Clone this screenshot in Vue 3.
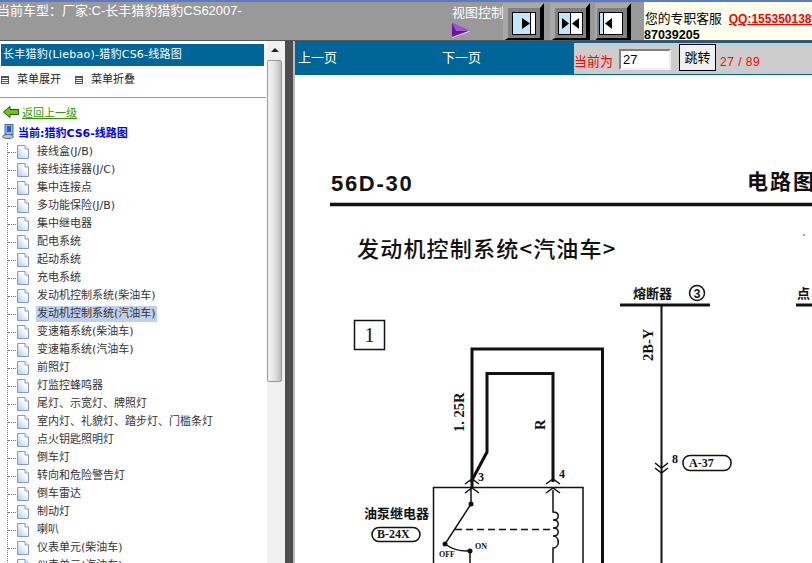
<template>
  <div class="page">
    <div class="top-bar">
      <div class="car-type">当前车型：厂家:C-长丰猎豹猎豹CS62007-</div>
      <div class="view-ctl">
        <span>视图控制</span>
        <svg class="view-arrow" width="19" height="15" viewBox="0 0 19 15">
          <polygon points="0,0 18,8 0,14.500" fill="#6a12a4" />
          <polygon points="0,0 18,8 4,8" fill="#a452d6" />
          <path d="M0 14.500L18 8" stroke="#e6d8ee" fill="none" />
        </svg>
      </div>
      <div class="view-btns">
        <div class="view-btn btn-a">
          <svg width="24" height="23" viewBox="0 0 24 23">
            <rect x="0.5" y="0.500" width="23" height="22" fill="#fff" stroke="#000" />
            <rect x="1" y="1" width="17" height="21" fill="#bfe8ff" />
            <line x1="18.500" y1="1" x2="18.500" y2="22" stroke="#000" />
            <polygon points="10,6 10,17 18,11.500" fill="#000" />
          </svg>
        </div>
        <div class="view-btn btn-b">
          <svg width="25" height="23" viewBox="0 0 25 23">
            <rect x="0.5" y="0.500" width="24" height="22" fill="#fff" stroke="#000" />
            <rect x="1" y="1" width="11" height="21" fill="#bfe8ff" />
            <line x1="12.500" y1="1" x2="12.500" y2="22" stroke="#000" />
            <polygon points="4,6 4,17 11,11.500" fill="#000" />
            <polygon points="21,6 21,17 14,11.500" fill="#000" />
          </svg>
        </div>
        <div class="view-btn btn-c">
          <svg width="24" height="23" viewBox="0 0 24 23">
            <rect x="0.5" y="0.500" width="23" height="22" fill="#fff" stroke="#000" />
            <rect x="1" y="1" width="3" height="21" fill="#bfe8ff" />
            <line x1="4.500" y1="1" x2="4.500" y2="22" stroke="#000" />
            <polygon points="13,6 13,17 6,11.500" fill="#000" />
          </svg>
        </div>
      </div>
      <div class="service">
        <div class="service-line">
          <span>您的专职客服</span>
          <a class="qq">QQ:1553501382</a>
        </div>
        <div class="service-tel">87039205</div>
      </div>
    </div>

    <div class="body">
      <div class="side">
        <div class="side-main">
          <div class="side-title">长丰猎豹(Liebao)-猎豹CS6-线路图</div>
          <div class="menu-ops">
            <span class="op"><i class="op-icon"></i>菜单展开</span>
            <span class="op"><i class="op-icon"></i>菜单折叠</span>
          </div>
          <div class="back-row">
            <svg width="16" height="12" viewBox="0 0 16 12">
              <polygon points="0.500,6 7,0.500 7,3.500 15.500,3.500 15.500,8.500 7,8.500 7,11.500" fill="#66cc00" stroke="#225500" />
            </svg>
            <a>返回上一级</a>
          </div>
          <div class="current-row">
            <svg width="13" height="15" viewBox="0 0 13 15">
              <rect x="3" y="0.500" width="8" height="10" fill="#8fb4e8" stroke="#4a6a9a" />
              <rect x="5" y="2" width="4" height="6" fill="#2a56c8" />
              <ellipse cx="6" cy="12.500" rx="5.500" ry="2" fill="#b8c4d8" stroke="#5a6a80" />
            </svg>
            <b>当前:猎豹CS6-线路图</b>
          </div>
          <svg class="defs" width="0" height="0">
            <defs>
              <linearGradient id="fileFill" x1="1" y1="0" x2="0" y2="1">
                <stop offset="0.350" stop-color="#fff" />
                <stop offset="1" stop-color="#a9c6f0" />
              </linearGradient>
            </defs>
          </svg>
          <ul class="tree">
            <li v-for="item in items" :key="item" class="tree-row">
              <i class="dots"></i>
              <svg class="file" width="12" height="14" viewBox="0 0 12 14">
                <path d="M0.500 0.500H8L11.500 4V13.500H0.500Z" fill="url(#fileFill)" stroke="#7f9cc8" />
                <path d="M8 0.500V4H11.500" fill="#fff" stroke="#7f9cc8" />
              </svg>
              <span class="label" :class="{ sel: item === selected }">{{ item }}</span>
            </li>
          </ul>
        </div>
        <div class="scrollbar">
          <div class="scroll-up"><i></i></div>
          <div class="scroll-thumb"></div>
        </div>
      </div>
      <div class="split"></div>

      <div class="main">
        <div class="nav">
          <div class="nav-links">
            <a>上一页</a>
            <a>下一页</a>
          </div>
          <div class="jump">
            <span class="cur">当前为</span>
            <input class="page-input" value="27" />
            <button class="go">跳转</button>
            <span class="count">27 / 89</span>
          </div>
        </div>
        <div class="doc">
          <svg class="sheet" width="517" height="488" viewBox="295 75 517 488">
            <g fill="#111">
              <text x="331" y="191" class="code">56D-30</text>
              <text x="747" y="189" class="code-cn">电路图</text>
              <text x="357" y="257" class="heading">发动机控制系统&lt;汽油车&gt;</text>
              <text x="633" y="298" class="small-cn">熔断器</text>
              <text x="797" y="298" class="small-cn">点</text>
              <text x="369.500" y="342" class="num">1</text>
              <text x="697" y="298" class="circled">3</text>
              <text x="0" y="0" class="wire-label" transform="translate(653 361) rotate(-90)">2B-Y</text>
              <text x="0" y="0" class="wire-label" transform="translate(464 432) rotate(-90)">1. 25R</text>
              <text x="0" y="0" class="wire-label" transform="translate(545 430) rotate(-90)">R</text>
              <text x="478" y="481" class="pin">3</text>
              <text x="559" y="478" class="pin">4</text>
              <text x="672" y="463" class="pin">8</text>
              <text x="364" y="518" class="small-cn">油泵继电器</text>
              <text x="689" y="467" class="tag">A-37</text>
              <text x="377" y="538" class="tag">B-24X</text>
              <text x="439" y="557" class="tiny">OFF</text>
              <text x="475" y="549" class="tiny">ON</text>
            </g>
            <g fill="none" stroke="#111">
              <path d="M330 204.500H812" stroke-width="3.500" />
              <path d="M620 305H710M796 305H812" stroke-width="3" />
              <circle cx="697" cy="293" r="7.500" stroke-width="1.500" />
              <rect x="354.500" y="320.500" width="30" height="29" stroke-width="1.500" />
              <path d="M661.500 305V563" stroke-width="2" />
              <path d="M472 488V349H602.500V563" stroke-width="3" />
              <path d="M471 482L487 452V373.500H553V482" stroke-width="3" />
              <path d="M433.500 563V487.500H583V563" stroke-width="1.500" />
              <path d="M465 484L472 479L479 484M465 493L472 488L479 493M546 484L553 479L560 484M546 493L553 488L560 493" stroke-width="1.500" />
              <path d="M655 463L661.500 468L668 463M655 468L661.500 473L668 468" stroke-width="1.500" />
              <path d="M471 488V504L445 544Q456 552 470 551V563" stroke-width="1.500" />
              <path d="M455 529.500H553" stroke-width="1.500" stroke-dasharray="7 4" />
              <path d="M553 490V512C560 512 560 520 553 520C560 520 560 528 553 528C560 528 560 536 553 536C560 536 560 548 553 548V563" stroke-width="1.500" />
              <rect x="683" y="455.500" width="48" height="15" rx="7" stroke-width="1.500" />
              <rect x="372" y="527.500" width="48" height="14" rx="7" stroke-width="1.500" />
            </g>
            <g fill="#111">
              <circle cx="471" cy="504" r="2.500" />
              <circle cx="445" cy="544" r="2.500" />
              <circle cx="470" cy="551" r="2.500" />
              <circle cx="804" cy="235" r="0.700" />
            </g>
          </svg>
        </div>
      </div>
    </div>
  </div>
</template>

<script setup>
const selected = '发动机控制系统(汽油车)'
const items = [
  '接线盒(J/B)',
  '接线连接器(J/C)',
  '集中连接点',
  '多功能保险(J/B)',
  '集中继电器',
  '配电系统',
  '起动系统',
  '充电系统',
  '发动机控制系统(柴油车)',
  '发动机控制系统(汽油车)',
  '变速箱系统(柴油车)',
  '变速箱系统(汽油车)',
  '前照灯',
  '灯监控蜂鸣器',
  '尾灯、示宽灯、牌照灯',
  '室内灯、礼貌灯、踏步灯、门槛条灯',
  '点火钥匙照明灯',
  '倒车灯',
  '转向和危险警告灯',
  '倒车雷达',
  '制动灯',
  '喇叭',
  '仪表单元(柴油车)',
  '仪表单元(汽油车)',
]
</script>

<style>
html,
body {
  margin: 0;
  overflow: hidden;
}
</style>

<style scoped>
.page {
  width: 812px;
  height: 563px;
  overflow: hidden;
  display: flex;
  flex-direction: column;
  font-family: "Liberation Sans", "Noto Sans CJK SC", sans-serif;
  background: #fff;
}

/* top bar */
.top-bar {
  height: 38px;
  flex: none;
  display: flex;
  background: #999;
  border-top: 2px solid #5b7cc4;
  border-bottom: 1px solid #555;
  color: #fff;
  overflow: hidden;
}
.car-type {
  width: 455px;
  flex: none;
  margin-left: -3px;
  padding-top: 1px;
  font-size: 13px;
  line-height: 16px;
}
.view-ctl {
  width: 51px;
  flex: none;
  font-size: 13px;
  line-height: 16px;
  padding-top: 3px;
}
.view-ctl span {
  display: block;
  white-space: nowrap;
}
.view-arrow {
  display: block;
  margin-top: 2px;
}
.view-btns {
  width: 141px;
  flex: none;
  display: flex;
  padding-top: 1px;
}
.view-btn {
  height: 38px;
  flex: none;
  box-sizing: border-box;
  padding-top: 4px;
  background: #808080;
  border-top: 5px solid #a8a8a8;
  border-left: 5px solid #a8a8a8;
  border-right: 4px solid #000;
  border-bottom: 3px solid #000;
}
.view-btn svg {
  display: block;
}
.btn-a {
  width: 41px;
  padding-left: 4px;
}
.btn-b {
  width: 40px;
  margin-left: 6px;
  padding-left: 3px;
}
.btn-c {
  width: 36px;
  margin-left: 5px;
  padding-left: 2px;
  border-left-width: 2px;
}
.service {
  flex: 1;
  min-width: 0;
  background: #ffffee;
  color: #000;
  padding-left: 1px;
  white-space: nowrap;
}
.service-line {
  display: flex;
  gap: 7px;
  font-size: 12.800px;
  line-height: 16px;
  margin-top: 9px;
}
.qq {
  color: #f00;
  font-weight: bold;
  font-size: 12px;
  text-decoration: underline;
}
.service-tel {
  font-size: 12.500px;
  font-weight: bold;
  line-height: 14px;
  margin-top: 1px;
  margin-left: -1px;
}

/* left tree */
.body {
  flex: 1;
  display: flex;
  min-height: 0;
}
.side {
  width: 285px;
  flex: none;
  display: flex;
}
.side-main {
  width: 267px;
  flex: none;
  padding-top: 3px;
  overflow: hidden;
  font-family: "DejaVu Sans", "Noto Sans CJK SC", sans-serif;
}
.side-title {
  margin: 0 3px 0 1px;
  height: 22px;
  line-height: 22px;
  padding-left: 2px;
  background: #006699;
  color: #fff;
  font-size: 11px;
  letter-spacing: 0.250px;
  white-space: nowrap;
}
.menu-ops {
  height: 24px;
  padding: 7px 0 0 1px;
  display: flex;
  align-items: flex-start;
  gap: 14px;
  margin-right: 1px;
  border-bottom: 1px solid #999;
  font-size: 11px;
  line-height: 14px;
  color: #222;
}
.op {
  display: flex;
  align-items: center;
}
.op-icon {
  display: block;
  width: 8px;
  height: 8px;
  margin-right: 8px;
  border: 1px solid #555;
  box-sizing: border-box;
  background: repeating-linear-gradient(#555 0 1px, #fff 1px 2px);
}
.back-row {
  display: flex;
  align-items: center;
  gap: 3px;
  padding: 5px 0 0 3px;
  height: 18px;
  font-size: 11px;
}
.back-row a {
  color: #339900;
  text-decoration: underline;
}
.current-row {
  display: flex;
  align-items: center;
  gap: 3px;
  margin-top: 3px;
  padding-left: 2px;
  height: 15px;
  font-size: 11px;
  color: #0000ff;
}
.defs {
  display: block;
}
.tree {
  list-style: none;
  margin: 4px 0 0 7px;
  padding: 0;
  border-left: 1px dotted #777;
}
.tree-row {
  height: 18px;
  display: flex;
  align-items: center;
  font-size: 11px;
  color: #333;
  white-space: nowrap;
}
.dots {
  width: 8px;
  height: 1px;
  margin-right: 1px;
  flex: none;
  border-bottom: 1px dotted #777;
  box-sizing: border-box;
}
.file {
  flex: none;
  margin-right: 7px;
}
.label {
  padding: 0 1px;
  line-height: 16px;
}
.label.sel {
  background: #bfd0ea;
}

/* scrollbar + splitter */
.scrollbar {
  flex: 1;
  padding-right: 3px;
  background: #f0f0f0;
  display: flex;
  flex-direction: column;
}
.scroll-up {
  height: 18px;
  display: flex;
  align-items: center;
  justify-content: center;
}
.scroll-up i {
  width: 0;
  height: 0;
  border-left: 4px solid transparent;
  border-right: 4px solid transparent;
  border-bottom: 4px solid #222;
}
.scroll-thumb {
  height: 322px;
  margin-top: 1px;
  border: 1px solid #999;
  border-radius: 2px;
  box-sizing: border-box;
  background: linear-gradient(90deg, #f2f2f2, #e6e6e6 45%, #bbb);
}
.split {
  width: 8px;
  flex: none;
  background: #4d4d4d;
  border-right: 2px solid #bbb;
}

/* right panel */
.main {
  flex: 1;
  min-width: 0;
  display: flex;
  flex-direction: column;
}
.nav {
  height: 34px;
  flex: none;
  display: flex;
  background: #006699;
  color: #fff;
  font-size: 13px;
}
.nav-links {
  width: 279px;
  flex: none;
  display: flex;
  align-items: center;
  gap: 105px;
  padding: 0 0 4px 3px;
  box-sizing: border-box;
}
.jump {
  flex: 1;
  display: flex;
  align-items: flex-start;
  background: #ccc;
  margin-top: 2px;
  height: 31px;
  color: #f00;
}
.cur {
  margin: 11px 6px 0 0;
  line-height: 16px;
}
.page-input {
  width: 52px;
  height: 21px;
  margin-top: 6px;
  padding: 0 2px;
  box-sizing: border-box;
  border: 2px solid;
  border-color: #808080 #eee #eee #808080;
  font: 13px "Liberation Sans", sans-serif;
  background: #fff;
  color: #000;
}
.go {
  width: 37px;
  height: 27px;
  margin: 1px 0 0 8px;
  padding: 0 0 3px;
  border: 1px solid #000;
  background: #f0f0f0;
  color: #000;
  font: 13px "Liberation Sans", "Noto Sans CJK SC", sans-serif;
}
.count {
  margin: 12px 0 0 4px;
  font-size: 12px;
  line-height: 14px;
  letter-spacing: 0.500px;
}
.doc {
  flex: 1;
  min-height: 0;
  background: #fff;
  overflow: hidden;
}
.sheet {
  display: block;
}
.code {
  font: bold 22px "Liberation Sans", sans-serif;
  letter-spacing: 1.700px;
}
.code-cn {
  font: bold 21px "Noto Sans CJK SC", sans-serif;
  letter-spacing: 2px;
}
.heading {
  font: 500 22px "Noto Sans CJK SC", sans-serif;
  letter-spacing: 1.200px;
}
.small-cn {
  font: bold 13px "Noto Sans CJK SC", sans-serif;
}
.num {
  font: 20px "Liberation Serif", serif;
  text-anchor: middle;
}
.circled {
  font: bold 12px "Liberation Sans", sans-serif;
  text-anchor: middle;
}
.wire-label {
  font: bold 14.500px "Liberation Serif", serif;
}
.pin {
  font: bold 12px "Liberation Serif", serif;
}
.tag {
  font: bold 12px "Liberation Serif", serif;
}
.tiny {
  font: bold 8px "Liberation Serif", serif;
}
</style>
